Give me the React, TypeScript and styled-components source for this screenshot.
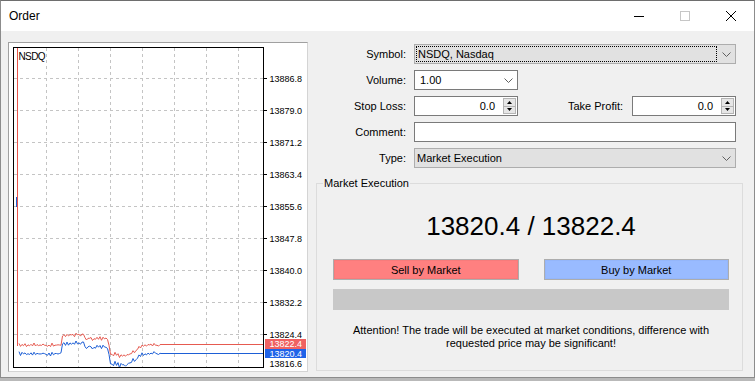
import React from "react";
import styled, { createGlobalStyle } from "styled-components";

const GlobalStyle = createGlobalStyle`
  html, body { margin: 0; padding: 0; background: #b9b9b9; }
  body {
    font-family: "Liberation Sans", Arial, sans-serif;
    font-size: 11px;
    color: #000;
  }
  * { box-sizing: border-box; }
`;

const Window = styled.div`
  width: 755px;
  height: 378px;
  display: flex;
  flex-direction: column;
  background: #f0f0f0;
  border: 1px solid #8c8c8c;
  border-top-color: #6e6e6e;
`;

const TitleBar = styled.div`
  flex: none;
  height: 30px;
  display: flex;
  align-items: center;
  background: #ffffff;
`;

const Title = styled.div`
  flex: 1;
  padding-left: 8px;
  font-family: "Segoe UI", "Liberation Sans", Arial, sans-serif;
  font-size: 12px;
`;

const CaptionButton = styled.div`
  width: 46px;
  height: 30px;
  display: flex;
  align-items: center;
  justify-content: center;
`;

const Content = styled.div`
  flex: 1;
  display: flex;
  align-items: flex-start;
  gap: 8px;
  padding: 11px 0 0 7px;
`;

const ChartPanel = styled.div`
  flex: none;
  width: 300px;
  height: 330px;
  background: #ffffff;
  border: 1px solid #a0a0a0;
  border-right-color: #d4d4d4;
  border-bottom-color: #d4d4d4;
`;

const ChartSvg = styled.svg`
  display: block;
`;

const FormColumn = styled.div`
  width: 427px;
  padding-top: 2px;
  display: flex;
  flex-direction: column;
`;

const FormGrid = styled.div`
  display: grid;
  grid-template-columns: 90px 322px;
  column-gap: 8px;
  row-gap: 6px;
  align-items: center;
`;

const Label = styled.div`
  text-align: right;
  white-space: nowrap;
`;

const ComboBox = styled.div<{ $variant: "gray" | "white"; $width?: number }>`
  height: 20px;
  width: ${(p) => (p.$width ? `${p.$width}px` : "100%")};
  display: flex;
  align-items: stretch;
  border: 1px solid ${(p) => (p.$variant === "gray" ? "#adadad" : "#7a7a7a")};
  background: ${(p) => (p.$variant === "gray" ? "#e1e1e1" : "#ffffff")};
`;

const ComboText = styled.div<{ $focused?: boolean; $indent: number }>`
  flex: 1;
  display: flex;
  align-items: center;
  margin: ${(p) => (p.$focused ? "1px 0 1px 1px" : "0")};
  padding-left: ${(p) => p.$indent}px;
  border: ${(p) => (p.$focused ? "1px dotted #000" : "none")};
  white-space: nowrap;
`;

const ChevronBox = styled.div`
  width: 18px;
  display: flex;
  align-items: center;
  justify-content: center;
`;

const TextInput = styled.div`
  height: 20px;
  border: 1px solid #7a7a7a;
  background: #ffffff;
`;

const SpinRow = styled.div`
  display: flex;
  align-items: center;
  gap: 9px;
`;

const SpinLabel = styled.div`
  flex: 1;
  text-align: right;
  white-space: nowrap;
`;

const SpinBox = styled.div`
  width: 104px;
  height: 20px;
  display: flex;
  border: 1px solid #7a7a7a;
  background: #ffffff;
`;

const SpinValue = styled.div`
  flex: 1;
  display: flex;
  align-items: center;
  justify-content: flex-end;
  padding-right: 8px;
`;

const SpinButtons = styled.div`
  width: 14px;
  display: flex;
  flex-direction: column;
  padding: 1px 1px 1px 0;
`;

const SpinArrow = styled.div`
  flex: 1;
  display: flex;
  align-items: center;
  justify-content: center;
  background: #e6e6e6;
  border: 1px solid #b4b4b4;
  & + & {
    border-top: none;
  }
`;

const GroupBox = styled.fieldset`
  margin: 9px 0 0 0;
  padding: 0 6px 20px 6px;
  border: 1px solid #dcdcdc;
  min-width: 0;
`;

const GroupLegend = styled.legend`
  padding: 0 1px;
  line-height: 13px;
`;

const GroupInner = styled.div`
  margin: 0 7px 0 10px;
  display: flex;
  flex-direction: column;
`;

const PriceText = styled.div`
  margin-top: 21px;
  font-size: 26px;
  line-height: 30px;
  text-align: center;
`;

const ActionRow = styled.div`
  margin-top: 18px;
  display: grid;
  grid-template-columns: 1fr 1fr;
  column-gap: 25px;
`;

const ActionButton = styled.div<{ $tone: "sell" | "buy" }>`
  height: 21px;
  display: flex;
  align-items: center;
  justify-content: center;
  border: 1px solid #adadad;
  background: ${(p) => (p.$tone === "sell" ? "#ff8080" : "#99bbff")};
  box-shadow: inset 0 0 0 1px ${(p) => (p.$tone === "sell" ? "#f77b7b" : "#94b6fa")};
`;

const ProgressBar = styled.div`
  margin-top: 9px;
  height: 21px;
  background: #c8c8c8;
`;

const Notice = styled.div`
  margin-top: 14px;
  text-align: center;
  line-height: 13px;
`;

const Chevron = () => (
  <svg width="9" height="5" viewBox="0 0 9 5">
    <path d="M0.5 0.5 L4.5 4.5 L8.5 0.5" fill="none" stroke="#606060" strokeWidth="1" />
  </svg>
);

const TriUp = () => (
  <svg width="5" height="3" viewBox="0 0 5 3">
    <polygon points="0,3 5,3 2.5,0" fill="#000" />
  </svg>
);

const TriDown = () => (
  <svg width="5" height="3" viewBox="0 0 5 3">
    <polygon points="0,0 5,0 2.5,3" fill="#000" />
  </svg>
);

const Spin: React.FC<{ value: string }> = ({ value }) => (
  <SpinBox>
    <SpinValue>{value}</SpinValue>
    <SpinButtons>
      <SpinArrow>
        <TriUp />
      </SpinArrow>
      <SpinArrow>
        <TriDown />
      </SpinArrow>
    </SpinButtons>
  </SpinBox>
);

/* ---------- chart data (page coordinates; group is shifted by the panel origin) ---------- */
const noise = (i: number) => {
  const v = Math.sin(i * 12.9898 + 78.233) * 43758.5453;
  return (v - Math.floor(v)) * 2 - 1;
};

const redBase = (x: number) => {
  if (x < 62) return 345;
  if (x < 80) return 336 - (x - 62) * 0.1;
  if (x < 85) return 334.5;
  if (x < 108) return 338.5;
  if (x < 110) return 346;
  if (x < 118) return 354;
  if (x < 128) return 355.5;
  if (x < 143) return 355.5 - (x - 128) * (10 / 15);
  return 345;
};

const buildLines = () => {
  const red: string[] = [];
  const blue: string[] = [];
  let i = 0;
  for (let x = 19; x <= 160; x += 1.5) {
    const zig = i % 2 === 0 ? -0.8 : 0.8;
    const r = redBase(x) + noise(i) * 1.2 + zig;
    const spread = x >= 110 && x < 128 ? 9.5 : 8.5;
    const b = r + spread + noise(i + 500) * 0.9;
    red.push(`${x},${r.toFixed(1)}`);
    blue.push(`${x},${b.toFixed(1)}`);
    i++;
  }
  red.push("161,344.5", "263,344.5");
  blue.push("161,353.5", "263,353.5");
  return { red: red.join(" "), blue: blue.join(" ") };
};

const LINES = buildLines();

const GRID_X = [46.5, 78.5, 110.5, 142.5, 174.5, 206.5, 238.5];
const LEVELS: [number, string][] = [
  [78.5, "13886.8"],
  [110.5, "13879.0"],
  [142.5, "13871.2"],
  [174.5, "13863.4"],
  [206.5, "13855.6"],
  [238.5, "13847.8"],
  [270.5, "13840.0"],
  [302.5, "13832.2"],
  [334.5, "13824.4"],
];

const RED = "#e65a50";
const BLUE = "#1d5fd6";

const Chart = () => (
  <ChartSvg width="298" height="328" viewBox="0 0 298 328">
    <g transform="translate(-9 -43)">
      <rect x="9" y="43" width="298" height="328" fill="#ffffff" />
      {GRID_X.map((x) => (
        <line key={x} x1={x} y1={48} x2={x} y2={367} stroke="#c4c4c4" strokeDasharray="3 3" />
      ))}
      {LEVELS.map(([y]) => (
        <line key={y} x1={14} y1={y} x2={263} y2={y} stroke="#c4c4c4" strokeDasharray="3 3" />
      ))}
      <polyline points={LINES.blue} fill="none" stroke={BLUE} strokeWidth="1" />
      <polyline points={LINES.red} fill="none" stroke={RED} strokeWidth="1" />
      <rect x="13" y="47" width="251" height="1" fill="#000" />
      <rect x="13" y="367" width="251" height="1" fill="#000" />
      <rect x="13" y="47" width="1" height="321" fill="#000" />
      <rect x="263" y="47" width="1" height="321" fill="#000" />
      {LEVELS.map(([y]) => (
        <line key={`t${y}`} x1={263} y1={y} x2={267} y2={y} stroke="#000" />
      ))}
      <g fontFamily="'Liberation Sans', Arial, sans-serif" fontSize="9" fill="#000">
        {LEVELS.map(([y, t]) => (
          <text key={`l${y}`} x={269.5} y={y + 3.2}>
            {t}
          </text>
        ))}
        <text x={269.5} y={367.3}>13816.6</text>
        <text x={18.5} y={59.5} fontSize="10" letterSpacing="-0.6">
          NSDQ
        </text>
      </g>
      <rect x="17" y="48" width="1" height="298" fill="#ea5248" />
      <rect x="16" y="197" width="1" height="10" fill={BLUE} />
      <rect x="265" y="339" width="41" height="10" fill="#f06262" />
      <rect x="265" y="349" width="41" height="9" fill="#1f63e8" />
      <g fontFamily="'Liberation Sans', Arial, sans-serif" fontSize="9" fill="#ffffff">
        <text x={269.5} y={347.3}>13822.4</text>
        <text x={269.5} y={356.8}>13820.4</text>
      </g>
    </g>
  </ChartSvg>
);

export default function App() {
  return (
    <>
      <GlobalStyle />
      <Window>
        <TitleBar>
          <Title>Order</Title>
          <CaptionButton>
            <svg width="10" height="10" viewBox="0 0 10 10">
              <path d="M0 5.5 H10" stroke="#000" strokeWidth="1" />
            </svg>
          </CaptionButton>
          <CaptionButton>
            <svg width="10" height="10" viewBox="0 0 10 10">
              <rect x="0.5" y="0.5" width="9" height="9" fill="none" stroke="#c6c6c6" />
            </svg>
          </CaptionButton>
          <CaptionButton>
            <svg width="10" height="10" viewBox="0 0 10 10">
              <path d="M0 0 L10 10 M10 0 L0 10" stroke="#000" strokeWidth="1" />
            </svg>
          </CaptionButton>
        </TitleBar>
        <Content>
          <ChartPanel>
            <Chart />
          </ChartPanel>
          <FormColumn>
            <FormGrid>
              <Label>Symbol:</Label>
              <ComboBox $variant="gray">
                <ComboText $focused $indent={1}>
                  NSDQ, Nasdaq
                </ComboText>
                <ChevronBox>
                  <Chevron />
                </ChevronBox>
              </ComboBox>

              <Label>Volume:</Label>
              <ComboBox $variant="white" $width={104}>
                <ComboText $indent={5}>1.00</ComboText>
                <ChevronBox>
                  <Chevron />
                </ChevronBox>
              </ComboBox>

              <Label>Stop Loss:</Label>
              <SpinRow>
                <Spin value="0.0" />
                <SpinLabel>Take Profit:</SpinLabel>
                <Spin value="0.0" />
              </SpinRow>

              <Label>Comment:</Label>
              <TextInput />

              <Label>Type:</Label>
              <ComboBox $variant="gray">
                <ComboText $indent={2}>Market Execution</ComboText>
                <ChevronBox>
                  <Chevron />
                </ChevronBox>
              </ComboBox>
            </FormGrid>

            <GroupBox>
              <GroupLegend>Market Execution</GroupLegend>
              <GroupInner>
                <PriceText>13820.4 / 13822.4</PriceText>
                <ActionRow>
                  <ActionButton $tone="sell">Sell by Market</ActionButton>
                  <ActionButton $tone="buy">Buy by Market</ActionButton>
                </ActionRow>
                <ProgressBar />
                <Notice>
                  Attention! The trade will be executed at market conditions, difference with requested price may be
                  significant!
                </Notice>
              </GroupInner>
            </GroupBox>
          </FormColumn>
        </Content>
      </Window>
    </>
  );
}
